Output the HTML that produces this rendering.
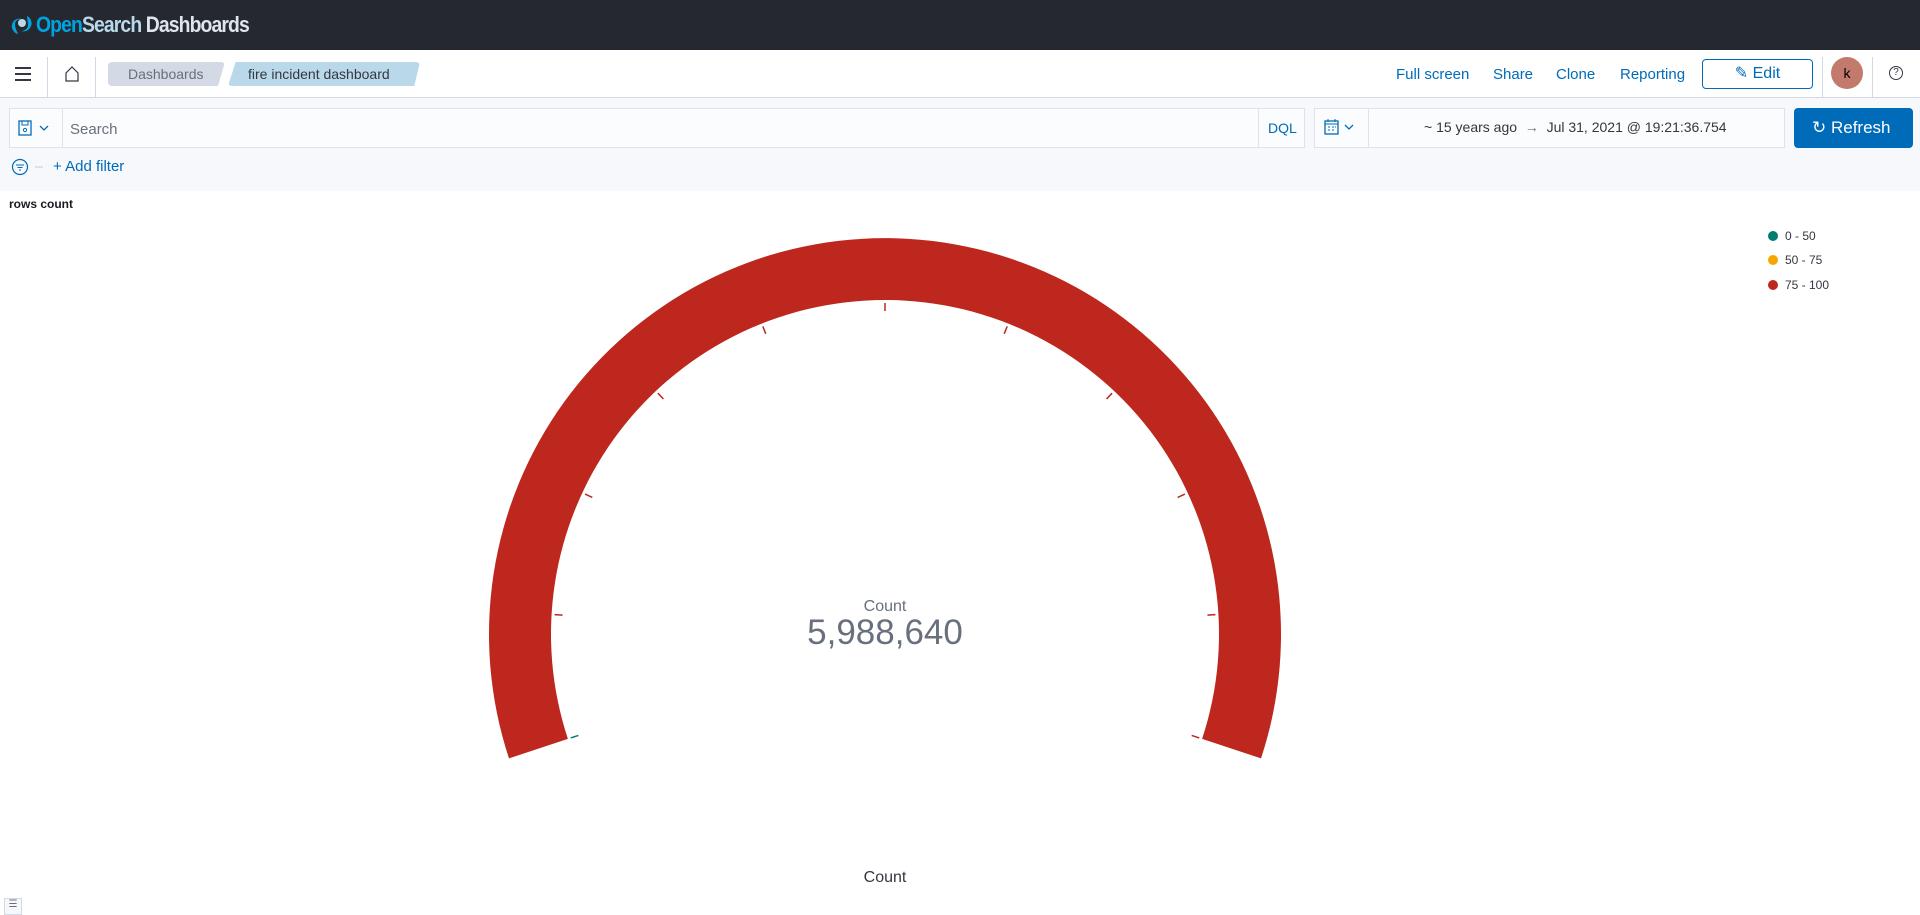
<!DOCTYPE html>
<html><head><meta charset="utf-8"><style>
*{box-sizing:border-box;margin:0;padding:0}
body{width:1920px;height:915px;overflow:hidden;background:#fff;font-family:"Liberation Sans",sans-serif;position:relative;color:#343741}
.abs{position:absolute}
.top{left:0;top:0;width:1920px;height:50px;background:#25282f}
.hdr{left:0;top:50px;width:1920px;height:48px;background:#fff;border-bottom:1px solid #d3dae6;box-shadow:0 1px 3px rgba(0,0,0,.1)}
.gray{left:0;top:98px;width:1920px;height:93px;background:#f7f8fc}
.lnk{color:#006bb8;font-size:15px;top:66px}
.box{background:#fbfcfd;border:1px solid #dde3ec}
</style></head><body>
<div class="abs top"></div>
<svg class="abs" style="left:10px;top:13px" width="24" height="24" viewBox="0 0 24 24"><path d="M17 3a8 8 0 0 1 3 12c-2 3-6 4-9 3 4 0 7-3 7-6 0-3-1-6-1-9z" fill="#00a3e0"/><path d="M8 21a8 8 0 0 1-5-12c2-3 6-4 8-3-3 0-6 2-6 5 0 4 2 7 3 10z" fill="#00a3e0"/><circle cx="12" cy="10" r="4" fill="#b9d9eb"/></svg>
<div class="abs" style="left:36px;top:12px;font-size:22px;font-weight:bold;letter-spacing:-1px;color:#fff;transform:scaleX(.88);transform-origin:left"><span style="color:#00a3e0">Open</span><span style="color:#b9d9eb">Search</span> <span style="color:#dfe5ef">Dashboards</span></div>
<div class="abs hdr"></div>
<div class="abs" style="left:15px;top:67px;width:16px;height:2px;background:#343741;box-shadow:0 6px 0 #343741,0 12px 0 #343741"></div>
<div class="abs" style="left:47px;top:57px;width:1px;height:41px;background:#d3dae6"></div>
<svg class="abs" style="left:64px;top:66px" width="16" height="16" viewBox="0 0 16 16"><path d="M2 15V7L8 1l6 6v8z" fill="none" stroke="#343741" stroke-width="1.2"/></svg>
<div class="abs" style="left:95px;top:57px;width:1px;height:41px;background:#d3dae6"></div>
<div class="abs" style="left:108px;top:62px;width:117px;height:24px;background:#d3dae6;border-radius:4px;clip-path:polygon(0 0,100% 0,94% 100%,0 100%);color:#69707d;font-size:14px;line-height:24px;padding-left:20px">Dashboards</div>
<div class="abs" style="left:228px;top:62px;width:192px;height:24px;background:#b9d9eb;border-radius:4px;clip-path:polygon(4% 0,100% 0,97% 100%,0 100%);color:#343741;font-size:14px;line-height:24px;padding-left:20px">fire incident dashboard</div>
<div class="abs lnk" style="left:1396px">Full screen</div>
<div class="abs lnk" style="left:1493px">Share</div>
<div class="abs lnk" style="left:1556px">Clone</div>
<div class="abs lnk" style="left:1620px">Reporting</div>
<div class="abs" style="left:1702px;top:59px;width:111px;height:30px;border:1px solid #006bb8;border-radius:4px;color:#006bb8;font-size:16px;line-height:28px;text-align:center">✎ Edit</div>
<div class="abs" style="left:1822px;top:57px;width:1px;height:41px;background:#d3dae6"></div>
<div class="abs" style="left:1831px;top:57px;width:32px;height:32px;border-radius:50%;background:#c17a6c;text-align:center;line-height:32px;font-size:14px;color:#000">k</div>
<div class="abs" style="left:1872px;top:57px;width:1px;height:41px;background:#d3dae6"></div>
<div class="abs" style="left:1889px;top:66px;width:14px;height:14px;border:1.3px solid #343741;border-radius:50%;font-size:10px;text-align:center;line-height:12px">?</div>
<div class="abs gray"></div>
<div class="abs box" style="left:9px;top:108px;width:1296px;height:40px"></div>
<div class="abs" style="left:62px;top:108px;width:1px;height:40px;background:#dde3ec"></div>
<svg class="abs" style="left:18px;top:119px" width="36" height="18" viewBox="0 0 36 18"><rect x="1" y="2" width="12" height="14" fill="none" stroke="#006bb8" stroke-width="1.3"/><circle cx="7" cy="11" r="1.6" fill="none" stroke="#006bb8"/><rect x="4" y="2" width="6" height="4" fill="none" stroke="#006bb8"/><path d="M22 7l4 4 4-4" fill="none" stroke="#006bb8" stroke-width="1.3"/></svg>
<div class="abs" style="left:70px;top:121px;font-size:15px;color:#69707d">Search</div>
<div class="abs" style="left:1258px;top:108px;width:1px;height:40px;background:#dde3ec"></div>
<div class="abs" style="left:1268px;top:120px;font-size:14px;color:#006bb8">DQL</div>
<div class="abs box" style="left:1314px;top:108px;width:471px;height:40px"></div>
<div class="abs" style="left:1368px;top:108px;width:1px;height:40px;background:#dde3ec"></div>
<svg class="abs" style="left:1324px;top:118px" width="36" height="18" viewBox="0 0 36 18"><rect x="1" y="3" width="13" height="13" fill="none" stroke="#006bb8" stroke-width="1.3"/><path d="M1 6h13M4 1v3M11 1v3M4 9h2M8 9h2M11 9h1M4 12h2M8 12h2" stroke="#006bb8"/><path d="M21 7l4 4 4-4" fill="none" stroke="#006bb8" stroke-width="1.3"/></svg>
<div class="abs" style="left:1424px;top:119px;font-size:14px;color:#343741;white-space:pre">~ 15 years ago  <span style="color:#69707d">→</span>  Jul 31, 2021 @ 19:21:36.754</div>
<div class="abs" style="left:1794px;top:108px;width:119px;height:40px;background:#006bb8;border-radius:4px;color:#fff;font-size:17px;line-height:40px;padding-left:18px">↻ Refresh</div>
<svg class="abs" style="left:11px;top:158px" width="36" height="18" viewBox="0 0 36 18"><circle cx="9" cy="9" r="7.5" fill="none" stroke="#006bb8" stroke-width="1.2"/><path d="M5 7h8M6.5 9.5h5M8 12h2" stroke="#006bb8"/><path d="M24 9h8" stroke="#c2c8d2"/></svg>
<div class="abs" style="left:53px;top:158px;font-size:15px;color:#006bb8">+ Add filter</div>
<div class="abs" style="left:9px;top:197px;font-size:12px;font-weight:bold;color:#1a1c21">rows count</div>
<svg class="abs" style="left:0;top:0" width="1920" height="915">
<path d="M509 758.4 A396 396 0 1 1 1261 758.4 L1202.1 738.9 A334 334 0 1 0 567.9 738.9 Z" fill="#bd271e"/>
<g stroke="#bd271e" stroke-width="1.5">
<line x1="554" y1="634" x2="562" y2="634" stroke="#017d73" transform="rotate(-18.3 885 634)"/>
<line x1="554" y1="634" x2="562" y2="634" transform="rotate(3.36 885 634)"/>
<line x1="554" y1="634" x2="562" y2="634" transform="rotate(25.02 885 634)"/>
<line x1="554" y1="634" x2="562" y2="634" transform="rotate(46.68 885 634)"/>
<line x1="554" y1="634" x2="562" y2="634" transform="rotate(68.34 885 634)"/>
<line x1="554" y1="634" x2="562" y2="634" transform="rotate(90 885 634)"/>
<line x1="554" y1="634" x2="562" y2="634" transform="rotate(111.66 885 634)"/>
<line x1="554" y1="634" x2="562" y2="634" transform="rotate(133.32 885 634)"/>
<line x1="554" y1="634" x2="562" y2="634" transform="rotate(154.98 885 634)"/>
<line x1="554" y1="634" x2="562" y2="634" transform="rotate(176.64 885 634)"/>
<line x1="554" y1="634" x2="562" y2="634" transform="rotate(198.3 885 634)"/>
</g>
<circle cx="1773" cy="236" r="5" fill="#017d73"/>
<circle cx="1773" cy="260" r="5" fill="#f5a700"/>
<circle cx="1773" cy="285" r="5" fill="#bd271e"/>
</svg>
<div class="abs" style="left:1785px;top:223.5px;font-size:12px;color:#343741;line-height:24.5px">0 - 50<br>50 - 75<br>75 - 100</div>
<div class="abs" style="left:785px;top:598px;width:200px;text-align:center;font-size:16px;color:#69707d">Count</div>
<div class="abs" style="left:735px;top:613px;width:300px;text-align:center;font-size:35px;color:#69707d">5,988,640</div>
<div class="abs" style="left:785px;top:869px;width:200px;text-align:center;font-size:16px;color:#343741">Count</div>
<div class="abs" style="left:4px;top:898px;width:18px;height:17px;border:1px solid #d3dae6;background:#f5f7fa;font-size:10px;text-align:center;color:#69707d">☰</div>
</body></html>
